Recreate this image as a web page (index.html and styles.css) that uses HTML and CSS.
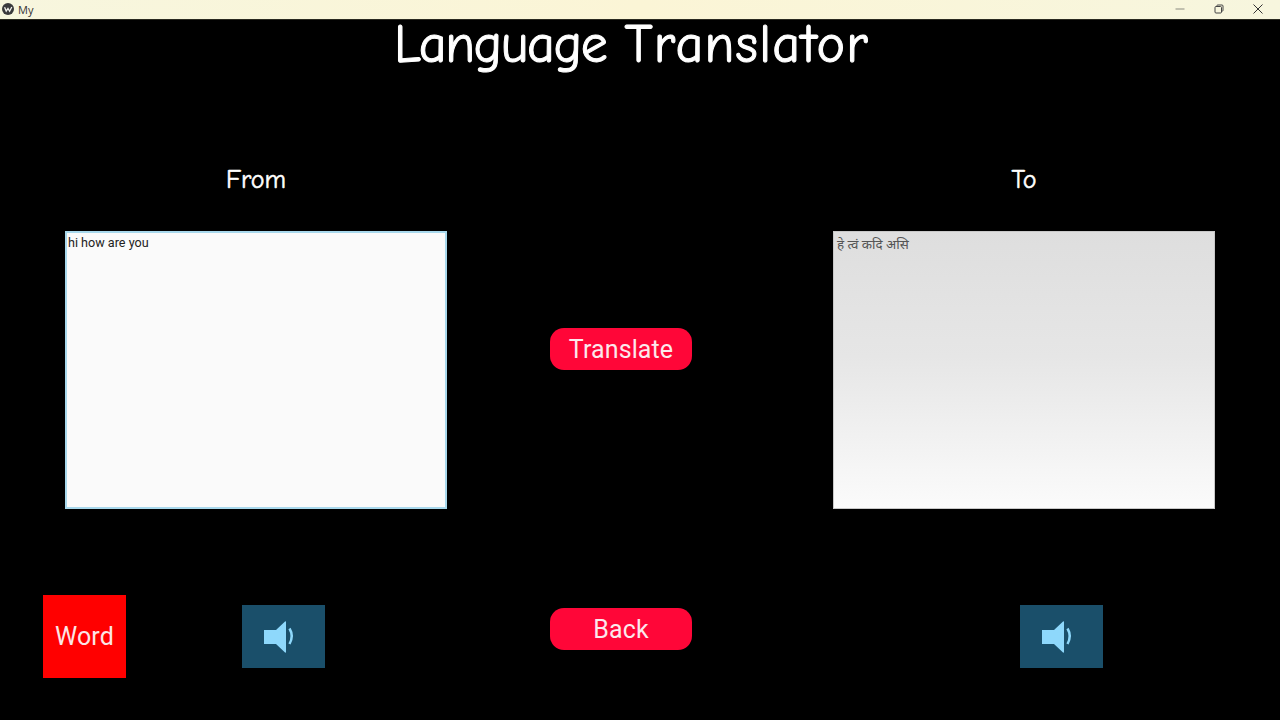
FILE: index.html
```html
<!DOCTYPE html>
<html lang="en">
<head>
<meta charset="utf-8">
<title>My</title>
<link rel="stylesheet" href="styles.css">
</head>
<body>
<div class="window">
  <header class="titlebar">
    <div class="app-id">
      <svg class="app-icon" viewBox="0 0 12 12" aria-hidden="true"><circle cx="6" cy="6" r="6" fill="#3a3a3c"/><path d="M2.6 4.2 4.2 8.2 6 5.4 7.6 8.2 9.8 4" fill="none" stroke="#f4f4ee" stroke-width="1.3"/></svg>
      <span>My</span>
    </div>
    <div class="win-controls">
      <svg class="win-btn" viewBox="0 0 10 10" aria-hidden="true"><path d="M0.5 5H9.5" stroke="#8a8a80" stroke-width="1"/></svg>
      <svg class="win-btn" viewBox="0 0 10 10" aria-hidden="true"><rect x="1" y="2.5" width="6.5" height="6.5" rx="1" fill="none" stroke="#444" stroke-width="1"/><path d="M3 2.5V1.5Q3 1 3.5 1H8Q9 1 9 2V6.500Q9 7 8.500 7H7.500" fill="none" stroke="#444" stroke-width="1"/></svg>
      <svg class="win-btn" viewBox="0 0 10 10" aria-hidden="true"><path d="M0.500 0.500 9.500 9.500M9.500 0.500 0.500 9.500" stroke="#333" stroke-width="1"/></svg>
    </div>
  </header>
  <main class="content">
    <h1 class="title"><span class="title-first">Language</span> <span class="title-second">Translator</span></h1>
    <section class="panels">
      <div class="panel">
        <h2 class="panel-label">From</h2>
        <div class="textbox textbox-input">hi how are you</div>
      </div>
      <div class="center-col">
        <button class="pill" type="button">Translate</button>
      </div>
      <div class="panel">
        <h2 class="panel-label">To</h2>
        <div class="textbox textbox-output" lang="sa">हे त्वं कदि असि</div>
      </div>
    </section>
    <section class="actions">
      <button class="word-btn" type="button">Word</button>
      <button class="speaker speaker-left" type="button" aria-label="Speak source">
        <svg viewBox="0 0 32 34" class="speaker-icon" aria-hidden="true"><path d="M0 10H12L21 1.500Q22 1 22 2V32Q22 33 21 32.500L12 24H0Z" fill="#8ed8fb"/><path d="M25.500 8.500Q30 16 25.500 24" fill="none" stroke="#8ed8fb" stroke-width="2.500"/></svg>
      </button>
      <button class="pill pill-back" type="button">Back</button>
      <button class="speaker speaker-right" type="button" aria-label="Speak translation">
        <svg viewBox="0 0 32 34" class="speaker-icon" aria-hidden="true"><path d="M0 10H12L21 1.500Q22 1 22 2V32Q22 33 21 32.500L12 24H0Z" fill="#8ed8fb"/><path d="M25.500 8.500Q30 16 25.500 24" fill="none" stroke="#8ed8fb" stroke-width="2.500"/></svg>
      </button>
    </section>
  </main>
</div>
</body>
</html>
```
FILE: styles.css
```css
* { box-sizing: border-box; }
html, body { margin: 0; height: 100%; background: #000; }
.window { width: 1280px; height: 720px; display: flex; flex-direction: column; overflow: hidden; background: #000; }

.titlebar {
  height: 20px;
  flex: none;
  display: flex;
  justify-content: space-between;
  align-items: center;
  padding-bottom: 1px;
  background: linear-gradient(90deg, #f7f6de 0%, #fbf5d6 50%, #f7f6de 100%);
  border-bottom: 1px solid #2a2a20;
  font: 11px "Open Sans", "Liberation Sans", sans-serif;
  color: #333;
}
.app-id { display: flex; align-items: center; gap: 4px; padding-left: 2px; }
.app-icon { width: 12px; height: 12px; }
.win-controls { display: flex; gap: 29px; padding-right: 17px; }
.win-btn { width: 10px; height: 10px; display: block; }

.content { flex: 1; display: flex; flex-direction: column; }

.title {
  margin: 0;
  height: 50px;
  padding-left: 394px;
  white-space: nowrap;
  font: 400 54px/50px "Comic Sans MS", "Comic Neue", Lato, sans-serif;
  color: #fff;
  -webkit-text-stroke: 1px #fff;
}
.title-first { letter-spacing: -1.4px; }
.title-second { letter-spacing: 1.2px; }

.panels {
  display: grid;
  grid-template-columns: 382px 386px 382px;
  padding-left: 65px;
  margin-top: 91px;
}
.panel { display: flex; flex-direction: column; align-items: stretch; }
.panel-label {
  margin: 0 0 31px;
  height: 39px;
  text-align: center;
  font: 400 26px/39px "Comic Sans MS", "Comic Neue", Lato, sans-serif;
  color: #fff;
  -webkit-text-stroke: 0.5px #fff;
}
.textbox {
  height: 278px;
  padding: 3px;
  font: 12.600px/16px Roboto, "Noto Sans", "Liberation Sans", sans-serif;
}
.textbox-input { background: #fafafa; border: 2px solid #a8d8ec; padding: 2px 1px; color: #222; }
.textbox-output {
  background: linear-gradient(180deg, #dedede 0%, #e6e6e6 45%, #fbfbfb 100%);
  border: 1px solid #c8c8c8;
  color: #555;
  padding: 5px 3px;
  font-size: 13.400px;
}

.center-col { padding: 167px 0 0 103px; }

.pill {
  width: 142px;
  height: 42px;
  padding: 0;
  border: 0;
  border-radius: 14px;
  background: #ff0638;
  color: #fce8ec;
  font: 25px Roboto, sans-serif;
  letter-spacing: 0.1px;
  display: block;
}

.actions { display: flex; align-items: flex-start; padding-left: 43px; margin-top: 86px; }
.word-btn {
  width: 83px;
  height: 83px;
  padding: 0;
  border: 0;
  background: #ff0000;
  color: #fbe6e6;
  font: 25px Roboto, sans-serif;
  letter-spacing: 0.2px;
}
.speaker {
  width: 83px;
  height: 63px;
  padding: 0;
  border: 0;
  background: #1a4f6a;
  display: flex;
  align-items: center;
  justify-content: center;
  margin-top: 10px;
}
.speaker-left { margin-left: 116px; }
.speaker-right { margin-left: 328px; }
.speaker-icon { width: 32px; height: 34px; margin-right: 7px; }
.pill-back { margin-left: 225px; margin-top: 13px; }
```
